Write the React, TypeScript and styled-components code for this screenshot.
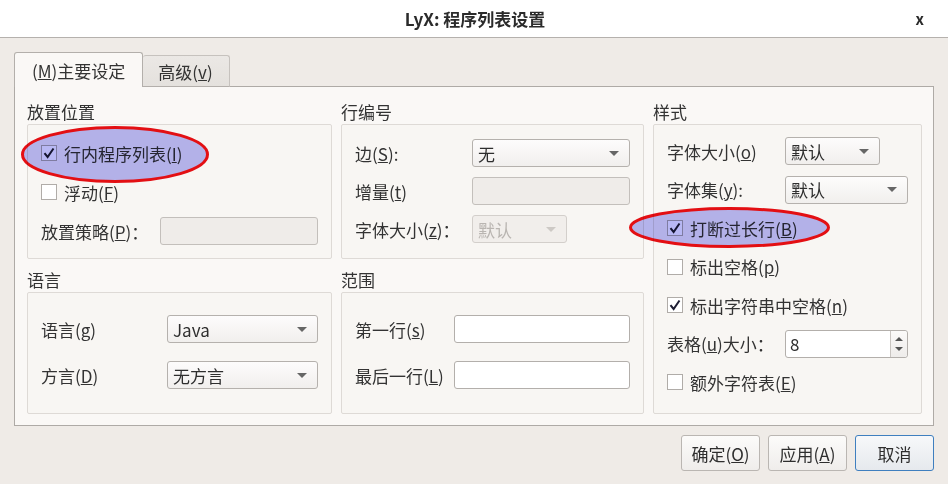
import React from 'react';
import styled, { createGlobalStyle } from 'styled-components';

const GlobalStyle = createGlobalStyle`
  html, body {
    margin: 0;
    padding: 0;
    width: 948px;
    height: 484px;
    overflow: hidden;
    background: #efebe7;
  }
  body {
    font-family: "Noto Sans CJK SC", "Liberation Sans", sans-serif;
    font-size: 17px;
    color: #3a3a3a;
  }
`;

const Window = styled.div`
  position: relative;
  width: 948px;
  height: 484px;
  display: flex;
  flex-direction: column;
  background: #efebe7;
`;

const TitleBar = styled.div`
  height: 37px;
  flex: none;
  background: #fff;
  border-bottom: 1px solid #b5b1ad;
  display: flex;
  align-items: center;
  justify-content: center;
  position: relative;
`;

const Title = styled.div`
  font-weight: bold;
  font-size: 17px;
  color: #2b2b2b;
  margin-left: 2px;
`;

const Close = styled.div`
  position: absolute;
  right: 24px;
  top: 8px;
  font-size: 15px;
  font-weight: bold;
  color: #2b2b2b;
`;

const Body = styled.div`
  flex: 1;
  display: flex;
  flex-direction: column;
  padding: 14px 14px 13px 14px;
`;

const TabBar = styled.div`
  display: flex;
  align-items: flex-end;
  height: 35px;
  position: relative;
  z-index: 1;
  margin-bottom: -1px;
`;

const Tab = styled.div<{ $active?: boolean }>`
  box-sizing: border-box;
  height: ${p => (p.$active ? 35 : 32)}px;
  padding: 0 ${p => (p.$active ? 17 : 16)}px 0 ${p => (p.$active ? 17 : 15)}px;
  display: flex;
  align-items: center;
  border: 1px solid ${p => (p.$active ? '#b3afab' : '#c6c2be')};
  border-bottom: ${p => (p.$active ? 'none' : '1px solid #b3afab')};
  border-left: ${p => (p.$active ? '1px solid #b3afab' : 'none')};
  border-radius: 3px 3px 0 0;
  background: ${p => (p.$active ? '#faf8f6' : 'linear-gradient(#ebe8e5, #e4e1dd)')};
  color: #333;
`;

const Panel = styled.div`
  box-sizing: border-box;
  height: 340px;
  border: 1px solid #aeaaa6;
  background: #faf8f6;
  padding: 12px 11px 11px 12px;
`;

const Grid = styled.div`
  display: grid;
  grid-template-columns: 305px 303px 1fr;
  grid-template-rows: 160px 147px;
  column-gap: 9px;
  row-gap: 8px;
`;

const Group = styled.div<{ $col: number; $row: string }>`
  display: flex;
  flex-direction: column;
  grid-column: ${p => p.$col};
  grid-row: ${p => p.$row};
`;

const GroupTitle = styled.div`
  height: 25px;
  line-height: 25px;
  flex: none;
  color: #333;
`;

const Frame = styled.div`
  flex: 1;
  border: 1px solid #dedad6;
  border-radius: 2px;
  background: #f8f6f3;
`;

const Form = styled.div<{ $cols: string; $pt: number; $gap: number }>`
  display: grid;
  grid-template-columns: ${p => p.$cols};
  grid-auto-rows: 28px;
  row-gap: ${p => p.$gap}px;
  padding: ${p => p.$pt}px 13px 0 13px;
  align-items: center;
`;

const Label = styled.div<{ $disabled?: boolean }>`
  white-space: nowrap;
  color: ${p => (p.$disabled ? '#b3afab' : '#333')};
`;

const CheckRow = styled.label`
  grid-column: 1 / -1;
  display: flex;
  align-items: center;
  gap: 7px;
  white-space: nowrap;
  color: #333;
`;

const Box = styled.span`
  box-sizing: border-box;
  width: 16px;
  height: 16px;
  flex: none;
  border: 1px solid #b0aca8;
  background: #fff;
  display: flex;
  align-items: center;
  justify-content: center;
`;

const Combo = styled.div<{ $w?: number; $disabled?: boolean }>`
  box-sizing: border-box;
  height: 28px;
  width: ${p => (p.$w ? `${p.$w}px` : 'auto')};
  justify-self: ${p => (p.$w ? 'start' : 'stretch')};
  border: 1px solid ${p => (p.$disabled ? '#d3cfcb' : '#b5b1ad')};
  border-radius: 3px;
  background: ${p => (p.$disabled ? '#f1eeeb' : 'linear-gradient(#fdfcfc, #f1efed)')};
  color: ${p => (p.$disabled ? '#b9b5b1' : '#2e2e2e')};
  display: flex;
  align-items: center;
  justify-content: space-between;
  padding: 0 10px 0 5px;
`;

const Arrow = styled.span<{ $disabled?: boolean }>`
  width: 0;
  height: 0;
  border-left: 5px solid transparent;
  border-right: 5px solid transparent;
  border-top: 5px solid ${p => (p.$disabled ? '#cdc9c5' : '#666')};
`;

const Input = styled.div<{ $disabled?: boolean }>`
  box-sizing: border-box;
  height: 28px;
  border: 1px solid ${p => (p.$disabled ? '#c3bfbb' : '#b3afab')};
  border-radius: 3px;
  background: ${p => (p.$disabled ? '#efece9' : '#fff')};
`;

const Spin = styled.div`
  box-sizing: border-box;
  height: 28px;
  border: 1px solid #b3afab;
  border-radius: 3px;
  background: #fff;
  display: flex;
  color: #2e2e2e;
`;

const SpinText = styled.div`
  flex: 1;
  display: flex;
  align-items: center;
  padding-left: 4px;
`;

const SpinButtons = styled.div`
  width: 16px;
  border-left: 1px solid #c9c5c1;
  background: linear-gradient(#fbfaf9, #eeecea);
  display: flex;
  flex-direction: column;
  align-items: center;
  justify-content: center;
  gap: 6px;
  border-radius: 0 3px 3px 0;
`;

const Tri = styled.span<{ $up?: boolean }>`
  width: 0;
  height: 0;
  border-left: 4px solid transparent;
  border-right: 4px solid transparent;
  ${p => (p.$up ? 'border-bottom: 4px solid #555;' : 'border-top: 4px solid #555;')}
`;

const ButtonRow = styled.div`
  display: flex;
  justify-content: flex-end;
  gap: 8px;
  margin-top: 9px;
`;

const Button = styled.div<{ $default?: boolean }>`
  box-sizing: border-box;
  width: 79px;
  height: 36px;
  border: 1px solid ${p => (p.$default ? '#3f7fbf' : '#bab6b2')};
  border-radius: 3px;
  background: ${p => (p.$default ? 'linear-gradient(#f7f8fa, #e6e9ed)' : 'linear-gradient(#fcfbfa, #efedeb)')};
  display: flex;
  align-items: center;
  justify-content: center;
  color: #2e2e2e;
`;

const Mark = styled.svg`
  position: absolute;
  pointer-events: none;
  mix-blend-mode: multiply;
  overflow: visible;
`;

const Check = () => (
  <svg width="12" height="12" viewBox="0 0 12 12">
    <path d="M1.5 6.2 L4.6 10 L10.5 1.5" fill="none" stroke="#1d1d33" strokeWidth="2" />
  </svg>
);

const CheckBox = ({ checked, children }: { checked?: boolean; children: React.ReactNode }) => (
  <CheckRow>
    <Box>{checked && <Check />}</Box>
    <span>{children}</span>
  </CheckRow>
);

const Select = ({ value, w, disabled }: { value: string; w?: number; disabled?: boolean }) => (
  <Combo $w={w} $disabled={disabled}>
    <span>{value}</span>
    <Arrow $disabled={disabled} />
  </Combo>
);

export default function App() {
  return (
    <Window>
      <GlobalStyle />
      <TitleBar>
        <Title>LyX: 程序列表设置</Title>
        <Close>x</Close>
      </TitleBar>
      <Body>
        <TabBar>
          <Tab $active>(<u>M</u>)主要设定</Tab>
          <Tab>高级(<u>v</u>)</Tab>
        </TabBar>
        <Panel>
          <Grid>
            <Group $col={1} $row="1">
              <GroupTitle>放置位置</GroupTitle>
              <Frame>
                <Form $cols="119px 1fr" $pt={14} $gap={11}>
                  <CheckBox checked>行内程序列表(<u>I</u>)</CheckBox>
                  <CheckBox>浮动(<u>F</u>)</CheckBox>
                  <Label>放置策略(<u>P</u>)：</Label>
                  <Input $disabled />
                </Form>
              </Frame>
            </Group>
            <Group $col={2} $row="1">
              <GroupTitle>行编号</GroupTitle>
              <Frame>
                <Form $cols="117px 1fr" $pt={14} $gap={10}>
                  <Label>边(<u>S</u>):</Label>
                  <Select value="无" />
                  <Label>增量(<u>t</u>)</Label>
                  <Input $disabled />
                  <Label>字体大小(<u>z</u>)：</Label>
                  <Select value="默认" w={95} disabled />
                </Form>
              </Frame>
            </Group>
            <Group $col={3} $row="1 / span 2">
              <GroupTitle>样式</GroupTitle>
              <Frame>
                <Form $cols="118px 1fr" $pt={12} $gap={10.5}>
                  <Label>字体大小(<u>o</u>)</Label>
                  <Select value="默认" w={95} />
                  <Label>字体集(<u>y</u>):</Label>
                  <Select value="默认" />
                  <CheckBox checked>打断过长行(<u>B</u>)</CheckBox>
                  <CheckBox>标出空格(<u>p</u>)</CheckBox>
                  <CheckBox checked>标出字符串中空格(<u>n</u>)</CheckBox>
                  <Label>表格(<u>u</u>)大小：</Label>
                  <Spin>
                    <SpinText>8</SpinText>
                    <SpinButtons>
                      <Tri $up />
                      <Tri />
                    </SpinButtons>
                  </Spin>
                  <CheckBox>额外字符表(<u>E</u>)</CheckBox>
                </Form>
              </Frame>
            </Group>
            <Group $col={1} $row="2">
              <GroupTitle>语言</GroupTitle>
              <Frame>
                <Form $cols="126px 1fr" $pt={22} $gap={18}>
                  <Label>语言(<u>g</u>)</Label>
                  <Select value="Java" />
                  <Label>方言(<u>D</u>)</Label>
                  <Select value="无方言" />
                </Form>
              </Frame>
            </Group>
            <Group $col={2} $row="2">
              <GroupTitle>范围</GroupTitle>
              <Frame>
                <Form $cols="99px 1fr" $pt={22} $gap={18}>
                  <Label>第一行(<u>s</u>)</Label>
                  <Input />
                  <Label>最后一行(<u>L</u>)</Label>
                  <Input />
                </Form>
              </Frame>
            </Group>
          </Grid>
        </Panel>
        <ButtonRow>
          <Button>确定(<u>O</u>)</Button>
          <Button>应用(<u>A</u>)</Button>
          <Button $default>取消</Button>
        </ButtonRow>
      </Body>
      <Mark style={{ left: 19, top: 124 }} width="192" height="61">
        <ellipse cx="96" cy="30.5" rx="92.5" ry="27" fill="#b8b8f4" stroke="#ea0f14" strokeWidth="3" />
      </Mark>
      <Mark style={{ left: 627, top: 205 }} width="205" height="45">
        <ellipse cx="102.5" cy="22.5" rx="99" ry="19" fill="#b8b8f4" stroke="#ea0f14" strokeWidth="3" />
      </Mark>
    </Window>
  );
}
